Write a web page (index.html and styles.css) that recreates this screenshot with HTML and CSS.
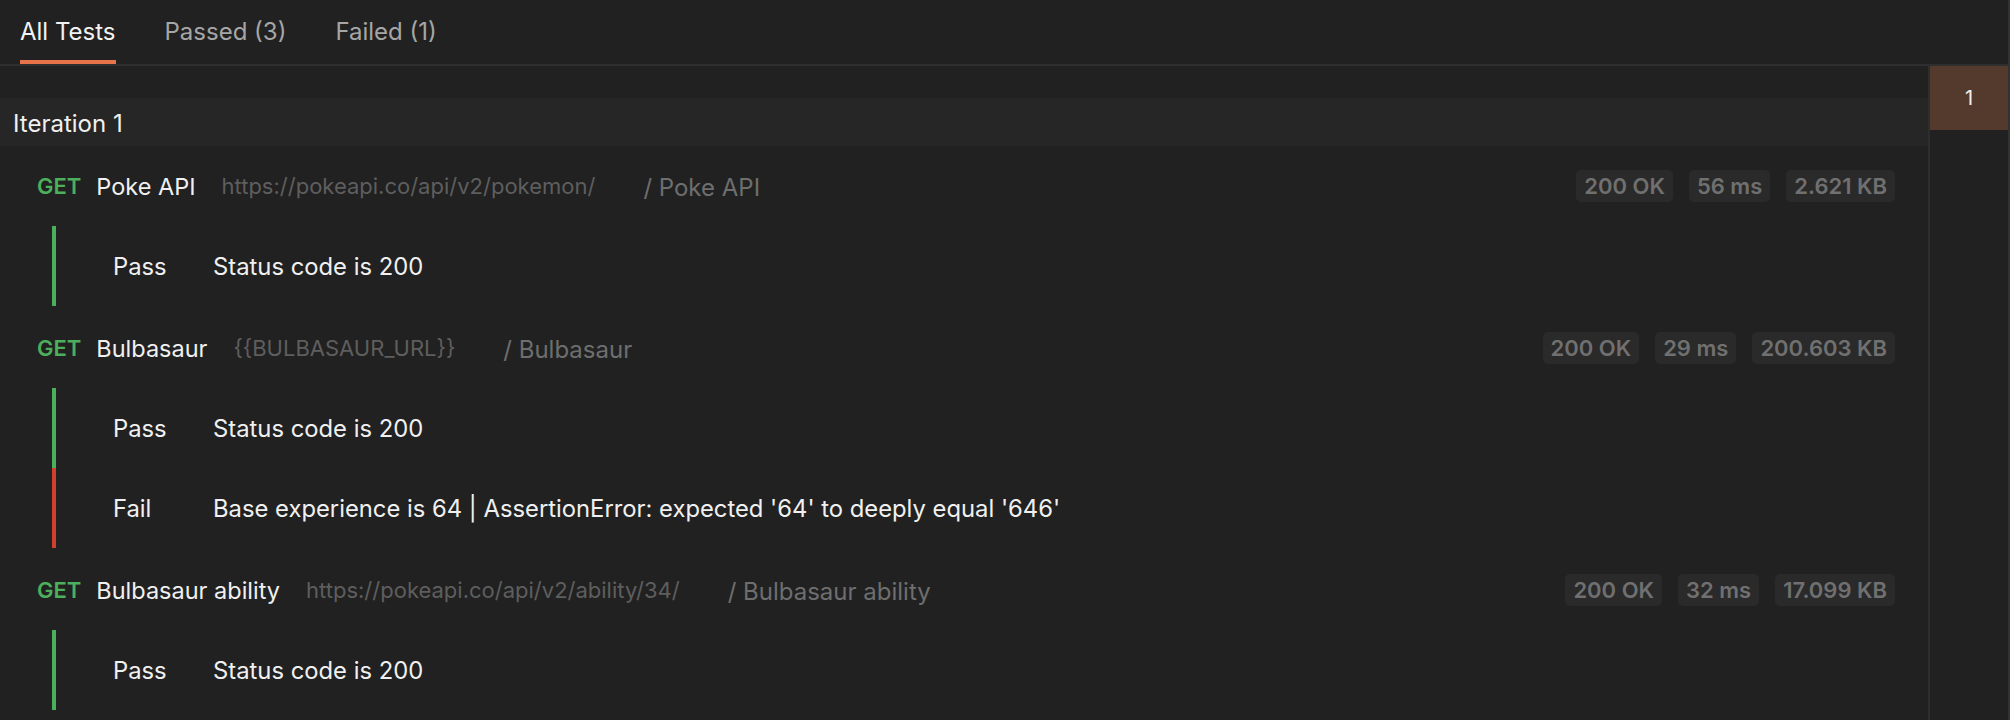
FILE: index.html
```html
<!DOCTYPE html>
<html lang="en">
<head>
<meta charset="utf-8">
<title>Test Results</title>
<link rel="stylesheet" href="styles.css">
</head>
<body>
<div class="app">
  <header class="tabbar">
    <div class="tab active">All Tests</div>
    <div class="tab">Passed (3)</div>
    <div class="tab">Failed (1)</div>
  </header>
  <div class="body">
    <main class="main">
      <div class="iteration">Iteration 1</div>
      <div class="requests">
        <section class="request">
          <div class="req-head">
            <span class="method">GET</span>
            <span class="req-name">Poke API</span>
            <span class="req-url">https://pokeapi.co/api/v2/pokemon/</span>
            <span class="req-path">/ Poke API</span>
            <div class="metrics">
              <span class="badge">200 OK</span>
              <span class="badge">56 ms</span>
              <span class="badge">2.621 KB</span>
            </div>
          </div>
          <div class="test pass"><span class="test-status">Pass</span><span class="test-name">Status code is 200</span></div>
        </section>
        <section class="request">
          <div class="req-head">
            <span class="method">GET</span>
            <span class="req-name">Bulbasaur</span>
            <span class="req-url">{{BULBASAUR_URL}}</span>
            <span class="req-path">/ Bulbasaur</span>
            <div class="metrics">
              <span class="badge">200 OK</span>
              <span class="badge">29 ms</span>
              <span class="badge">200.603 KB</span>
            </div>
          </div>
          <div class="test pass"><span class="test-status">Pass</span><span class="test-name">Status code is 200</span></div>
          <div class="test fail"><span class="test-status">Fail</span><span class="test-name">Base experience is 64 | AssertionError: expected '64' to deeply equal '646'</span></div>
        </section>
        <section class="request">
          <div class="req-head">
            <span class="method">GET</span>
            <span class="req-name">Bulbasaur ability</span>
            <span class="req-url">https://pokeapi.co/api/v2/ability/34/</span>
            <span class="req-path">/ Bulbasaur ability</span>
            <div class="metrics">
              <span class="badge">200 OK</span>
              <span class="badge">32 ms</span>
              <span class="badge">17.099 KB</span>
            </div>
          </div>
          <div class="test pass"><span class="test-status">Pass</span><span class="test-name">Status code is 200</span></div>
        </section>
      </div>
    </main>
    <aside class="iter-nav">
      <div class="iter-item active">1</div>
    </aside>
  </div>
</div>
</body>
</html>
```
FILE: styles.css
```css
* { box-sizing: border-box; }
html, body {
  margin: 0;
  padding: 0;
  background: #212121;
  height: 720px;
  overflow: hidden;
}
body {
  font-family: Inter, "Noto Sans", "Liberation Sans", sans-serif;
  color: #f0f0f0;
}
.app {
  display: flex;
  flex-direction: column;
  height: 720px;
  border-right: 2px solid #333333;
}
.tabbar {
  display: flex;
  gap: 49px;
  padding-left: 20px;
  height: 66px;
  border-bottom: 2px solid #2e2e2e;
}
.tab {
  height: 64px;
  display: flex;
  align-items: center;
  font-size: 24px;
  color: #a6a6a6;
  border-bottom: 4px solid transparent;
  padding-top: 2px;
}
.tab.active {
  color: #f2f2f2;
  border-bottom-color: #e8734a;
}
.body {
  flex: 1;
  display: flex;
  min-height: 0;
}
.main {
  flex: 1;
  padding-top: 32px;
  border-right: 2px solid #2e2e2e;
  min-width: 0;
}
.iteration {
  height: 48px;
  background: #262626;
  display: flex;
  align-items: center;
  padding-left: 13px;
  padding-top: 2px;
  font-size: 24px;
  color: #f0f0f0;
}
.requests {
  display: flex;
  flex-direction: column;
  gap: 2px;
}
.req-head {
  height: 80px;
  display: flex;
  align-items: center;
  padding-left: 37px;
  padding-right: 33px;
  font-size: 24px;
}
.method {
  color: #4caf5c;
  font-weight: 600;
  font-size: 22px;
  margin-right: 15px;
}
.req-name {
  color: #f0f0f0;
  font-size: 23.5px;
  margin-right: 26px;
}
.req-url {
  color: #5e5e5e;
  font-size: 22px;
  margin-right: 48px;
}
.req-path {
  color: #6e6e6e;
  position: relative;
  top: 1px;
}
.metrics {
  margin-left: auto;
  display: flex;
  gap: 16px;
}
.badge {
  height: 32px;
  padding: 0 8px;
  display: flex;
  align-items: center;
  background: #2a2a2a;
  border-radius: 5px;
  color: #707070;
  font-weight: 600;
  font-size: 22px;
}
.test {
  height: 80px;
  margin-left: 52px;
  display: flex;
  align-items: center;
  padding-left: 57px;
  border-left: 4px solid #4caf5c;
  font-size: 23.8px;
  color: #f0f0f0;
}
.test.fail {
  border-left-color: #d0402d;
}
.test-status {
  width: 100px;
  flex: none;
}
.iter-nav {
  width: 78px;
  flex: none;
}
.iter-item {
  height: 64px;
  display: flex;
  align-items: center;
  justify-content: center;
  font-size: 20px;
  color: #f0f0f0;
}
.iter-item.active {
  background: #543a2c;
}
```
